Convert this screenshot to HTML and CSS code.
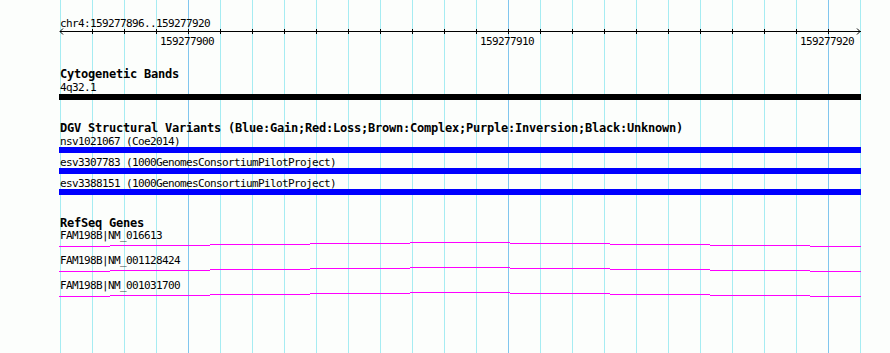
FILE: index.html
```html
<!DOCTYPE html>
<html lang="en">
  <head>
    <meta charset="UTF-8" />
    <title>chr4:159277896..159277920</title>
    <link rel="stylesheet" href="styles.css">
  </head>
  <body>
    <div class="panel">

      <div class="ruler">
        <div class="label">chr4:159277896..159277920</div>
        <svg class="axis" width="802" height="20">
          <path class="axis-line" d="M1 1.5H802M4 -1.5L1 1.5L4 4.5M798 -1.5L801 1.5L798 4.5" />
          <path class="axis-line" d="M33.5 -1V4M65.5 -1V4M97.5 -1V4M129.5 -1V4M161.5 -1V4M193.5 -1V4M225.5 -1V4M257.5 -1V4M289.5 -1V4M321.5 -1V4M353.5 -1V4M385.5 -1V4M417.5 -1V4M449.5 -1V4M481.5 -1V4M513.5 -1V4M545.5 -1V4M577.5 -1V4M609.5 -1V4M641.5 -1V4M673.5 -1V4M705.5 -1V4M737.5 -1V4M769.5 -1V4" />
          <text class="tick-label" x="101" y="15">159277900</text>
          <text class="tick-label" x="421" y="15">159277910</text>
          <text class="tick-label" x="741" y="15">159277920</text>
        </svg>
      </div>

      <div class="track track-bands">
        <div class="track-title">Cytogenetic Bands</div>
        <div class="label">4q32.1</div>
        <div class="bar bar-black"></div>
      </div>

      <div class="track track-dgv">
        <div class="track-title">DGV Structural Variants (Blue:Gain;Red:Loss;Brown:Complex;Purple:Inversion;Black:Unknown)</div>
        <div class="variant">
          <div class="label">nsv1021067 (Coe2014)</div>
          <div class="bar bar-blue"></div>
        </div>
        <div class="variant">
          <div class="label">esv3307783 (1000GenomesConsortiumPilotProject)</div>
          <div class="bar bar-blue"></div>
        </div>
        <div class="variant">
          <div class="label">esv3388151 (1000GenomesConsortiumPilotProject)</div>
          <div class="bar bar-blue"></div>
        </div>
      </div>

      <div class="track track-genes">
        <div class="track-title">RefSeq Genes</div>
        <div class="gene">
          <div class="label gene-label">FAM198B|NM_016613</div>
          <svg class="gene-line" width="802" height="13">
            <path d="M0 4.5H51M51 3.5H151M151 2.5H251M251 1.5H351M351 0.5H451M451 1.5H551M551 2.5H651M651 3.5H751M751 4.5H802" />
          </svg>
        </div>
        <div class="gene">
          <div class="label gene-label">FAM198B|NM_001128424</div>
          <svg class="gene-line" width="802" height="13">
            <path d="M0 4.5H51M51 3.5H151M151 2.5H251M251 1.5H351M351 0.5H451M451 1.5H551M551 2.5H651M651 3.5H751M751 4.5H802" />
          </svg>
        </div>
        <div class="gene">
          <div class="label gene-label">FAM198B|NM_001031700</div>
          <svg class="gene-line" width="802" height="13">
            <path d="M0 4.5H51M51 3.5H151M151 2.5H251M251 1.5H351M351 0.5H451M451 1.5H551M551 2.5H651M651 3.5H751M751 4.5H802" />
          </svg>
        </div>
      </div>

    </div>
  </body>
</html>
```
FILE: styles.css
```css
body {
  margin: 0;
  background: #fcfefc;
  color: #000;
  font-family: 'DejaVu Sans Mono', monospace;
}

.panel {
  width: 890px;
  height: 353px;
  box-sizing: border-box;
  padding: 17px 0 0 59px;
  overflow: hidden;
  background-color: #fcfefc;
  /* major grid lines every 10 bp, minor every bp */
  background-image:
    repeating-linear-gradient(to right, #80c6ee 0 1px, transparent 1px 320px),
    repeating-linear-gradient(to right, #a6ecf2 0 1px, transparent 1px 32px);
  background-position: 188px 0, 60px 0;
  background-size: 641px 100%, 801px 100%;
  background-repeat: no-repeat;
}

.label {
  margin-left: 1px;
  font-size: 11px;
  line-height: 13px;
  height: 13px;
  letter-spacing: -0.623px;
  white-space: nowrap;
}

.track-title {
  margin-left: 1px;
  font-size: 12px;
  font-weight: bold;
  line-height: 13px;
  height: 13px;
  letter-spacing: -0.225px;
  white-space: nowrap;
}

.axis {
  display: block;
  overflow: visible;
}

.axis-line {
  fill: none;
  stroke: #000;
  stroke-width: 1;
}

.tick-label {
  font-family: 'DejaVu Sans Mono', monospace;
  font-size: 11px;
  letter-spacing: -0.623px;
  fill: #000;
}

.track-bands {
  margin-top: 18px;
}

.track-dgv {
  margin-top: 22px;
}

.track-genes {
  margin-top: 22px;
}

.bar {
  width: 802px;
  height: 6px;
}

.bar-black {
  background: #000;
}

.bar-blue {
  background: #0000ff;
}

.variant {
  margin-bottom: 3px;
}

.variant .label {
  height: 12px;
}

.gene-label {
  height: 12px;
  line-height: 11px;
}

.gene-line {
  display: block;
  overflow: visible;
}

.gene-line path {
  fill: none;
  stroke: #ff00ff;
  stroke-width: 1;
}
```
